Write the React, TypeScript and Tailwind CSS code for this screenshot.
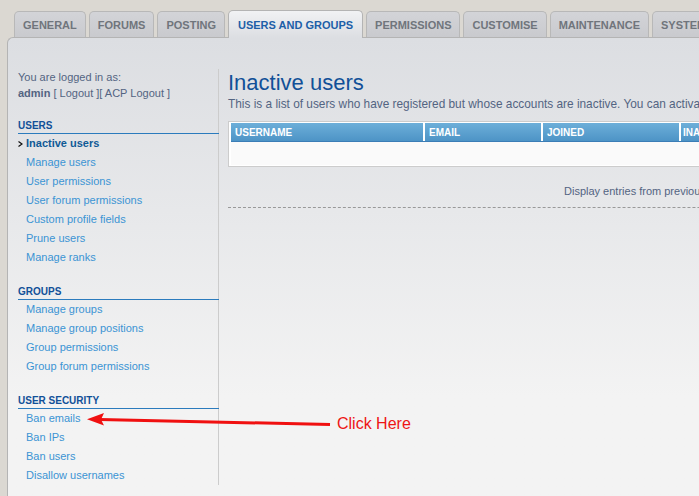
import React from "react";

const tabs = ["GENERAL", "FORUMS", "POSTING", "USERS AND GROUPS", "PERMISSIONS", "CUSTOMISE", "MAINTENANCE", "SYSTEM"];

const sections: { title: string; items: string[] }[] = [
  {
    title: "USERS",
    items: ["Inactive users", "Manage users", "User permissions", "User forum permissions", "Custom profile fields", "Prune users", "Manage ranks"],
  },
  {
    title: "GROUPS",
    items: ["Manage groups", "Manage group positions", "Group permissions", "Group forum permissions"],
  },
  {
    title: "USER SECURITY",
    items: ["Ban emails", "Ban IPs", "Ban users", "Disallow usernames"],
  },
];

export default function App() {
  return (
    <div className="relative w-[699px] h-[496px] overflow-hidden bg-[#dbd8d2] font-['Liberation_Sans',Arial,sans-serif]">
      <div className="w-[1100px]">
        {/* Tabs */}
        <div className="flex items-end gap-[3px] pl-[14px] pt-[10px] relative z-10">
          {tabs.map((t) => {
            const active = t === "USERS AND GROUPS";
            return active ? (
              <div
                key={t}
                className="h-[28px] -mb-px px-[9px] pt-[2px] flex items-center rounded-t-[5px] border border-b-0 border-[#b4b4b4] bg-linear-to-b from-[#f1f2f4] to-[#dcdee2] text-[11px] font-bold text-[#1d5fa8]"
              >
                {t}
              </div>
            ) : (
              <div
                key={t}
                className="h-[26px] px-[8px] pt-[2px] flex items-center rounded-t-[5px] border border-b-0 border-[#b8b8b8] bg-linear-to-b from-[#d3d4d8] to-[#c9cace] text-[11px] font-bold text-[#70757c]"
              >
                {t}
              </div>
            );
          })}
        </div>

        {/* Panel */}
        <div className="ml-[7px] h-[480px] rounded-tl-[6px] border-l border-t border-[#b4b4b4] bg-linear-to-b from-[#dcdee2] to-[#f3f3f3] to-[75%] flex pt-[31px] pl-[10px]">
          {/* Sidebar */}
          <div className="w-[201px] shrink-0 border-r border-[#cccccc] self-start">
            <div className="text-[11px] leading-[16px] text-[#536482]">
              <div>You are logged in as:</div>
              <div>
                <span className="font-bold">admin</span> [ Logout ][ ACP Logout ]
              </div>
            </div>
            {sections.map((s) => (
              <div key={s.title}>
                <div className="mt-[18px] mr-[-1px] text-[10px] leading-[14px] font-bold text-[#115098] border-b border-[#2b7bbd]">
                  {s.title}
                </div>
                <ul>
                  {s.items.map((it) => {
                    const active = it === "Inactive users";
                    return (
                      <li
                        key={it}
                        className={`relative h-[19px] leading-[19px] pl-[8px] text-[11px] ${
                          active ? "font-bold text-[#105a96]" : "text-[#3b94d4]"
                        }`}
                      >
                        {active && (
                          <svg className="absolute left-[0px] top-[7px]" width="5" height="6" viewBox="0 0 5 6">
                            <path d="M0.5 0.5 L4 3 L0.5 5.5" fill="none" stroke="#111" strokeWidth="1.2" />
                          </svg>
                        )}
                        {it}
                      </li>
                    );
                  })}
                </ul>
              </div>
            ))}
          </div>

          {/* Content */}
          <div className="pl-[9px] flex-1">
            <h1 className="mt-[1px] text-[22px] leading-[26px] text-[#115098]">Inactive users</h1>
            <p className="text-[11.85px] leading-[16px] text-[#536482] whitespace-nowrap">
              This is a list of users who have registered but whose accounts are inactive. You can activate, delete or remind (by sending an email) these users if you wish.
            </p>
            <div className="mt-[9px] border border-[#cccccc] bg-white pt-[1px] pb-[1px] px-[2px]">
              <div className="flex h-[19px] bg-linear-to-b from-[#6dafd9] to-[#4d94c6] border-b border-[#3b7db6] text-[10px] font-bold text-white leading-[19px]">
                <div className="w-[192px] pl-[4px]">USERNAME</div>
                <div className="w-[118px] pl-[4px] border-l-2 border-white">EMAIL</div>
                <div className="w-[138px] pl-[4px] border-l-2 border-white">JOINED</div>
                <div className="w-[200px] pl-[2px] border-l-2 border-white">INACTIVE</div>
              </div>
              <div className="h-[23px] bg-[#fafafa]" />
            </div>
            <div className="mt-[16px] pl-[336px] text-[11px] leading-[16px] text-[#536482] whitespace-nowrap">
              Display entries from previous: <span className="text-[#105289]">All</span>
            </div>
            <div className="mt-[8px] border-t border-dashed border-[#999999]" />
          </div>
        </div>
      </div>

      {/* Annotation arrow */}
      <svg className="absolute left-0 top-0 pointer-events-none" width="699" height="496" viewBox="0 0 699 496">
        <line x1="330" y1="424.5" x2="100" y2="419.5" stroke="#f01010" strokeWidth="3" />
        <polygon points="87,419.3 104,413 101,419.6 104,425.5" fill="#f01010" />
      </svg>
      <div className="absolute left-[337px] top-[414px] text-[16px] leading-[20px] text-[#ee1515]">Click Here</div>
    </div>
  );
}
